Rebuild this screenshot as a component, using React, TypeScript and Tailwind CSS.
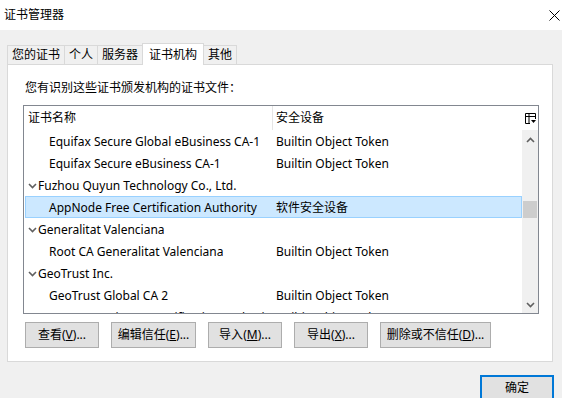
import { useState } from 'react';

type Row = {
  name: string;
  device?: string;
  group?: boolean;
};

const rows: Row[] = [
  { name: 'Equifax Secure Global eBusiness CA-1', device: 'Builtin Object Token' },
  { name: 'Equifax Secure eBusiness CA-1', device: 'Builtin Object Token' },
  { name: 'Fuzhou Quyun Technology Co., Ltd.', group: true },
  { name: 'AppNode Free Certification Authority', device: '软件安全设备' },
  { name: 'Generalitat Valenciana', group: true },
  { name: 'Root CA Generalitat Valenciana', device: 'Builtin Object Token' },
  { name: 'GeoTrust Inc.', group: true },
  { name: 'GeoTrust Global CA 2', device: 'Builtin Object Token' },
  { name: 'GeoTrust Primary Certification Authority', device: 'Builtin Object Token' },
];

const tabs = ['您的证书', '个人', '服务器', '证书机构', '其他'];

const Chevron = ({ up = false }: { up?: boolean }) => (
  <svg width="9" height="6" viewBox="0 0 9 6" className="block">
    <path
      d={up ? 'M1 5 L4.5 1.5 L8 5' : 'M1 1 L4.5 4.5 L8 1'}
      fill="none"
      stroke="currentColor"
      strokeWidth={1.6}
    />
  </svg>
);

const Btn = ({ label, hot, rest, w }: { label: string; hot: string; rest: string; w: string }) => (
  <button
    className={`h-[26px] ${w} shrink-0 whitespace-nowrap overflow-hidden bg-[#e1e1e1] border border-[#adadad] text-[12px] text-black flex items-center justify-center`}
  >
    {label}(<span className="underline">{hot}</span>){rest}
  </button>
);

const App = () => {
  const [selected, setSelected] = useState(3);
  const [tab] = useState(3);

  return (
    <div className="w-[562px] h-[398px] bg-[#f0f0f0] flex flex-col overflow-hidden text-black font-['Noto_Sans','Noto_Sans_CJK_SC',sans-serif]">
      {/* title bar */}
      <div className="h-[30px] bg-white flex items-center justify-between pl-[4px] shrink-0">
        <span className="text-[12px]">证书管理器</span>
        <svg width="11" height="11" viewBox="0 0 11 11" className="mr-[2px]">
          <path d="M0.5 0.5 L10.5 10.5 M10.5 0.5 L0.5 10.5" stroke="#000" strokeWidth={1} />
        </svg>
      </div>

      <div className="flex-1 pl-[7px] pt-[13px] relative">
        {/* tabs */}
        <div className="flex items-end h-[21px] relative z-10">
          {tabs.map((t, i) =>
            i === tab ? (
              <div
                key={t}
                className="h-[22px] -mb-px -ml-px px-[6px] bg-white border border-b-0 border-[#d9d9d9] text-[12px] flex items-center"
              >
                {t}
              </div>
            ) : (
              <div
                key={t}
                className={`h-[19px] px-[4px] border border-b-0 border-[#d9d9d9] text-[12px] flex items-center ${i === 0 ? '' : '-ml-px'}`}
              >
                {t}
              </div>
            )
          )}
        </div>

        {/* panel */}
        <div className="w-[546px] h-[298px] bg-white border border-[#d9d9d9] pl-[15px] pt-[15px]">
          <div className="text-[12px] pl-[2px] leading-[16px]">您有识别这些证书颁发机构的证书文件：</div>

          <div className="mt-[9px] w-[516px] h-[209px] border border-[#828790] flex flex-col overflow-hidden">
            {/* header */}
            <div className="h-[24px] flex shrink-0 text-[12px]">
              <div className="w-[249px] border-r border-[#e5e5e5] pl-[4px] flex items-center">证书名称</div>
              <div className="flex-1 pl-[3px] flex items-center">安全设备</div>
              <div className="w-[16px] flex items-center justify-center">
                <svg width="11" height="11" viewBox="0 0 11 11">
                  <path d="M0.5 0.5 H10.5 V6 M0.5 0.5 V10.5 H5 M0.5 3.5 H10.5 M4 0.5 V10.5" fill="none" stroke="#000" strokeWidth={1} />
                  <path d="M6 7 H11 L8.5 10 Z" fill="#000" />
                </svg>
              </div>
            </div>

            <div className="flex flex-1 min-h-0">
              {/* rows */}
              <div className="flex-1 overflow-hidden">
                {rows.map((r, i) => (
                  <div
                    key={r.name}
                    onClick={() => setSelected(i)}
                    className={`h-[22px] pt-[2px] flex items-center text-[12px] ml-px border ${
                      selected === i ? 'bg-[#cce8ff] border-[#99d1ff]' : 'border-transparent'
                    }`}
                  >
                    {r.group ? (
                      <div className="w-[247px] flex items-center pl-[1px] whitespace-nowrap">
                        <span className="text-[#606060] w-[10px] flex justify-center mr-[1px]">
                          <Chevron />
                        </span>
                        {r.name}
                      </div>
                    ) : (
                      <>
                        <div className="w-[247px] pl-[23px] whitespace-nowrap overflow-hidden">{r.name}</div>
                        <div className="pl-[3px] whitespace-nowrap">{r.device}</div>
                      </>
                    )}
                  </div>
                ))}
              </div>

              {/* scrollbar */}
              <div className="w-[16px] bg-[#f0f0f0] flex flex-col items-center text-[#606060]">
                <div className="h-[17px] flex items-center justify-center pt-[2px]">
                  <Chevron up />
                </div>
                <div className="flex-1 w-full relative">
                  <div className="absolute left-[1px] right-[1px] top-[54px] h-[17px] bg-[#cdcdcd]" />
                </div>
                <div className="h-[17px] flex items-center justify-center">
                  <Chevron />
                </div>
              </div>
            </div>
          </div>

          {/* buttons */}
          <div className="flex gap-[12px] mt-[8px] ml-[2px]">
            <Btn label="查看" hot="V" rest="..." w="w-[74px]" />
            <Btn label="编辑信任" hot="E" rest="..." w="w-[85px]" />
            <Btn label="导入" hot="M" rest="..." w="w-[74px]" />
            <Btn label="导出" hot="X" rest="..." w="w-[74px]" />
            <Btn label="删除或不信任" hot="D" rest="..." w="w-[111px]" />
          </div>
        </div>

        <div className="flex justify-end pr-[8px] mt-[13px]">
          <button className="w-[74px] h-[26px] bg-[#e1e1e1] border-2 border-[#0078d7] text-[12px]">确定</button>
        </div>
      </div>
    </div>
  );
};

export default App;
